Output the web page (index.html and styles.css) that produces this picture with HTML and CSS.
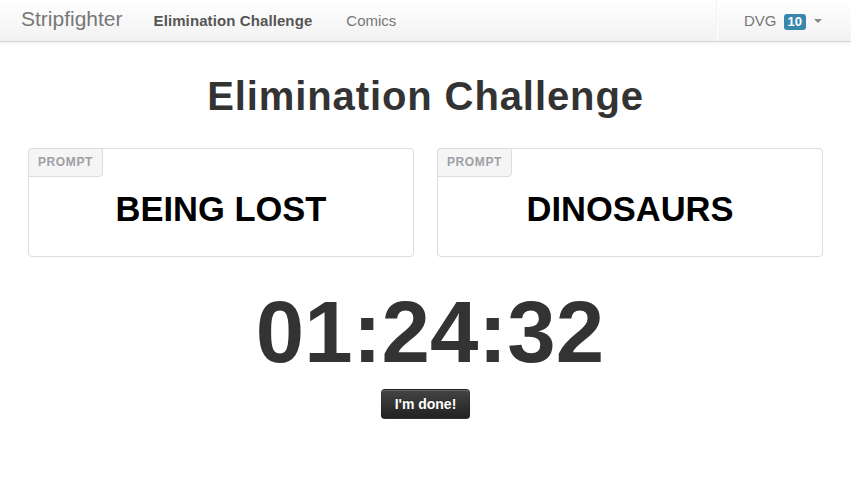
FILE: index.html
```html
<!DOCTYPE html>
<html>
<head>
<meta charset="utf-8">
<title>Stripfighter</title>
<link rel="stylesheet" href="styles.css">
</head>
<body>
<header class="navbar">
  <a class="brand" href="#">Stripfighter</a>
  <nav class="nav">
    <a class="nav-link active" href="#">Elimination Challenge</a>
    <a class="nav-link" href="#">Comics</a>
  </nav>
  <div class="nav-right">
    <span class="divider-vertical"></span>
    <a class="user-link" href="#">
      <span class="user-name">DVG</span>
      <span class="badge">10</span>
      <span class="caret"></span>
    </a>
  </div>
</header>
<main class="page">
  <h1 class="title">Elimination Challenge</h1>
  <div class="prompts">
    <section class="prompt-box">
      <span class="prompt-label">PROMPT</span>
      <div class="prompt-text">BEING LOST</div>
    </section>
    <section class="prompt-box">
      <span class="prompt-label">PROMPT</span>
      <div class="prompt-text">DINOSAURS</div>
    </section>
  </div>
  <div class="timer">01:24:32</div>
  <div class="actions">
    <button class="btn-inverse" type="button">I'm done!</button>
  </div>
</main>
</body>
</html>
```
FILE: styles.css
```css
* { box-sizing: border-box; }
html, body { margin: 0; padding: 0; background: #fff; }
body {
  font-family: "Liberation Sans", Arial, Helvetica, sans-serif;
  color: #333;
  font-size: 14px;
  line-height: 20px;
}
a { text-decoration: none; }

.navbar {
  display: flex;
  align-items: stretch;
  height: 42px;
  background: linear-gradient(to bottom, #ffffff, #f2f2f2);
  border-bottom: 1px solid #d4d4d4;
  box-shadow: 0 1px 4px rgba(0, 0, 0, 0.065);
}
.brand {
  font-size: 21px;
  line-height: 20px;
  color: #777;
  padding: 9px 14px 12px 21px;
}
.nav { display: flex; }
.nav-link {
  font-size: 15px;
  line-height: 20px;
  color: #777;
  padding: 11px 17px 10px;
}
.nav-link.active { font-weight: bold; color: #555; letter-spacing: 0.1px; }

.nav-right {
  margin-left: auto;
  display: flex;
  align-items: stretch;
}
.divider-vertical {
  width: 2px;
  height: 41px;
  border-left: 1px solid #f2f2f2;
  border-right: 1px solid #ffffff;
}
.user-link {
  display: flex;
  align-items: center;
  padding: 0 29px 0 26px;
  color: #777;
  font-size: 15px;
}
.user-name { margin-right: 7px; }
.badge {
  display: inline-block;
  background: #3a87ad;
  color: #fff;
  font-weight: bold;
  font-size: 13px;
  line-height: 14px;
  padding: 1px 4px;
  border-radius: 3px;
  margin-right: 8px;
  margin-top: 2px;
}
.caret {
  width: 0;
  height: 0;
  border-top: 4px solid #888;
  border-left: 4px solid transparent;
  border-right: 4px solid transparent;
  margin-top: 1px;
}

.page { padding: 0 28px; }
.title {
  margin: 34px 0 0;
  text-align: center;
  font-size: 40px;
  line-height: 40px;
  letter-spacing: 0.9px;
  font-weight: bold;
  color: #333;
}
.prompts {
  margin-top: 32px;
  display: grid;
  grid-template-columns: 1fr 1fr;
  column-gap: 23px;
}
.prompt-box {
  display: flex;
  flex-direction: column;
  border: 1px solid #ddd;
  border-radius: 4px;
  padding-bottom: 27px;
}
.prompt-label {
  align-self: flex-start;
  margin: -1px 0 0 -1px;
  padding: 3px 9px 4px;
  font-size: 12px;
  line-height: 20px;
  letter-spacing: 0.6px;
  font-weight: bold;
  color: #9da0a4;
  background: #f5f5f5;
  border: 1px solid #ddd;
  border-radius: 4px 0 4px 0;
}
.prompt-text {
  margin-top: 12px;
  text-align: center;
  font-size: 34.5px;
  line-height: 40px;
  font-weight: bold;
  color: #000;
}
.timer {
  margin-top: 31px;
  padding-left: 9px;
  text-align: center;
  font-size: 87px;
  line-height: 87px;
  font-weight: bold;
  color: #333;
}
.actions {
  margin-top: 14px;
  display: flex;
  justify-content: center;
}
.btn-inverse {
  font-family: "Liberation Sans", Arial, Helvetica, sans-serif;
  font-size: 14px;
  line-height: 20px;
  font-weight: bold;
  color: #fff;
  text-shadow: 0 -1px 0 rgba(0, 0, 0, 0.25);
  padding: 4px 13px;
  background: linear-gradient(to bottom, #444444, #222222);
  border: 1px solid rgba(0, 0, 0, 0.1);
  border-bottom-color: rgba(0, 0, 0, 0.25);
  border-radius: 4px;
  box-shadow: inset 0 1px 0 rgba(255, 255, 255, 0.2), 0 1px 2px rgba(0, 0, 0, 0.05);
  cursor: pointer;
}
```
